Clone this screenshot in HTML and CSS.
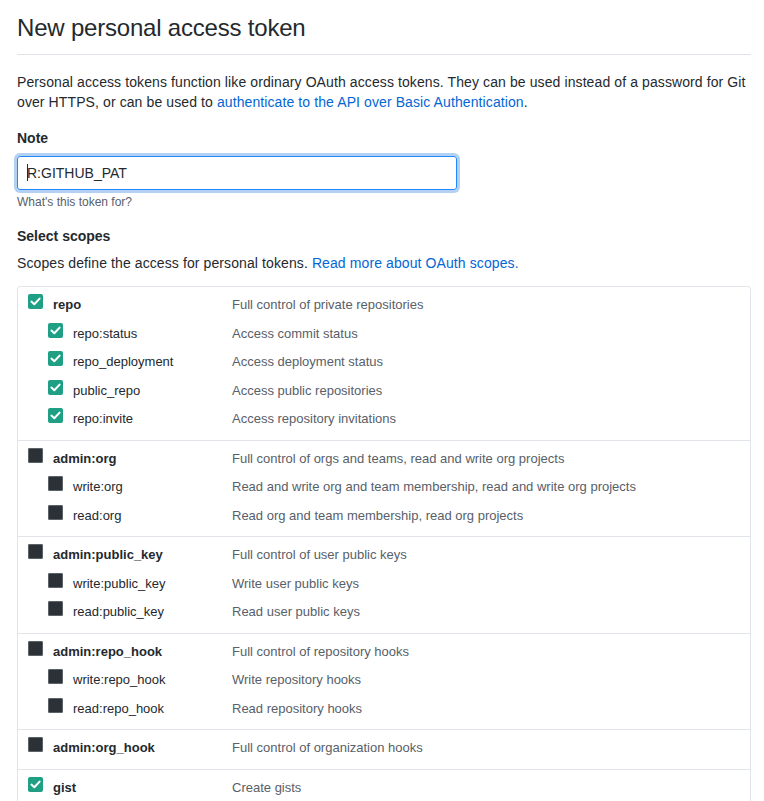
FILE: index.html
```html
<!DOCTYPE html>
<html lang="en">
<head>
<meta charset="utf-8">
<title>New personal access token</title>
<link rel="stylesheet" href="styles.css">
</head>
<body>
<div class="page">
  <h2 class="subhead">New personal access token</h2>
  <p class="intro">Personal access tokens function like ordinary OAuth access tokens. They can be used instead of a password for Git over HTTPS, or can be used to <a href="#">authenticate to the API over Basic Authentication</a>.</p>

  <div class="field-label">Note</div>
  <div class="input"><span class="caret"></span>R:GITHUB_PAT</div>
  <div class="note">What's this token for?</div>

  <div class="section-title">Select scopes</div>
  <p class="scopes-intro">Scopes define the access for personal tokens. <a href="#">Read more about OAuth scopes.</a></p>

  <div class="scopes">
    <div class="group">
      <div class="row top"><span class="name"><span class="cb on"><svg viewBox="0 0 15 15"><path d="M3.4 7.6 6.3 10.3 11.6 4.6"/></svg></span>repo</span><span class="desc">Full control of private repositories</span></div>
      <div class="row sub"><span class="name"><span class="cb on"><svg viewBox="0 0 15 15"><path d="M3.4 7.6 6.3 10.3 11.6 4.6"/></svg></span>repo:status</span><span class="desc">Access commit status</span></div>
      <div class="row sub"><span class="name"><span class="cb on"><svg viewBox="0 0 15 15"><path d="M3.4 7.6 6.3 10.3 11.6 4.6"/></svg></span>repo_deployment</span><span class="desc">Access deployment status</span></div>
      <div class="row sub"><span class="name"><span class="cb on"><svg viewBox="0 0 15 15"><path d="M3.4 7.6 6.3 10.3 11.6 4.6"/></svg></span>public_repo</span><span class="desc">Access public repositories</span></div>
      <div class="row sub"><span class="name"><span class="cb on"><svg viewBox="0 0 15 15"><path d="M3.4 7.6 6.3 10.3 11.6 4.6"/></svg></span>repo:invite</span><span class="desc">Access repository invitations</span></div>
    </div>
    <div class="group">
      <div class="row top"><span class="name"><span class="cb"></span>admin:org</span><span class="desc">Full control of orgs and teams, read and write org projects</span></div>
      <div class="row sub"><span class="name"><span class="cb"></span>write:org</span><span class="desc">Read and write org and team membership, read and write org projects</span></div>
      <div class="row sub"><span class="name"><span class="cb"></span>read:org</span><span class="desc">Read org and team membership, read org projects</span></div>
    </div>
    <div class="group">
      <div class="row top"><span class="name"><span class="cb"></span>admin:public_key</span><span class="desc">Full control of user public keys</span></div>
      <div class="row sub"><span class="name"><span class="cb"></span>write:public_key</span><span class="desc">Write user public keys</span></div>
      <div class="row sub"><span class="name"><span class="cb"></span>read:public_key</span><span class="desc">Read user public keys</span></div>
    </div>
    <div class="group">
      <div class="row top"><span class="name"><span class="cb"></span>admin:repo_hook</span><span class="desc">Full control of repository hooks</span></div>
      <div class="row sub"><span class="name"><span class="cb"></span>write:repo_hook</span><span class="desc">Write repository hooks</span></div>
      <div class="row sub"><span class="name"><span class="cb"></span>read:repo_hook</span><span class="desc">Read repository hooks</span></div>
    </div>
    <div class="group">
      <div class="row top"><span class="name"><span class="cb"></span>admin:org_hook</span><span class="desc">Full control of organization hooks</span></div>
    </div>
    <div class="group">
      <div class="row top"><span class="name"><span class="cb on"><svg viewBox="0 0 15 15"><path d="M3.4 7.6 6.3 10.3 11.6 4.6"/></svg></span>gist</span><span class="desc">Create gists</span></div>
    </div>
  </div>
</div>
</body>
</html>
```

FILE: styles.css
```css
html, body {
  margin: 0;
  padding: 0;
  background: #ffffff;
}
body {
  font-family: "Liberation Sans", Arial, sans-serif;
  font-size: 14px;
  line-height: 20px;
  color: #24292e;
}
a {
  color: #0366d6;
  text-decoration: none;
}
.page {
  width: 734px;
  padding: 10px 13px 0 17px;
}
.subhead {
  margin: 0;
  font-size: 24px;
  font-weight: normal;
  letter-spacing: -0.2px;
  line-height: 36px;
  padding-bottom: 8px;
  border-bottom: 1px solid #e1e4e8;
}
.intro {
  margin: 17px 0 0;
  letter-spacing: 0.1px;
}
.field-label {
  margin-top: 16px;
  font-weight: bold;
}
.input {
  box-sizing: border-box;
  width: 440px;
  height: 34px;
  margin-top: 8px;
  padding: 6px 9px;
  border: 1px solid #2188ff;
  border-radius: 3px;
  box-shadow: 0 0 0 3px rgba(3, 102, 214, 0.3);
  color: #24292e;
  white-space: nowrap;
}
.caret {
  display: inline-block;
  width: 1px;
  height: 17px;
  margin-right: -1px;
  background: #24292e;
  vertical-align: -3px;
}
.note {
  margin-top: 4px;
  font-size: 12px;
  line-height: 17px;
  color: #586069;
}
.section-title {
  margin-top: 15px;
  font-weight: bold;
}
.scopes-intro {
  margin: 7px 0 0;
  letter-spacing: 0.1px;
}
.scopes {
  margin-top: 13px;
  border: 1px solid #e1e4e8;
  border-radius: 3px;
}
.group {
  padding: 4px 0 6px;
}
.group + .group {
  border-top: 1px solid #e1e4e8;
}
.row {
  display: flex;
  align-items: baseline;
  line-height: 28.5px;
  height: 28.5px;
  white-space: nowrap;
}
.name {
  box-sizing: border-box;
  width: 214px;
  flex: none;
  font-size: 13px;
  color: #24292e;
}
.row.top .name {
  padding-left: 10px;
  font-weight: bold;
}
.row.sub .name {
  padding-left: 30px;
}
.desc {
  font-size: 13px;
  color: #586069;
}
.cb {
  display: inline-block;
  box-sizing: border-box;
  width: 15px;
  height: 15px;
  margin-right: 10px;
  border-radius: 2px;
  background: #2b3137;
  box-shadow: inset 0 0 0 1px #5b6268;
  vertical-align: baseline;
  position: relative;
}
.cb.on {
  background: #1f9f84;
  box-shadow: none;
}
.cb svg {
  position: absolute;
  left: 0;
  top: 0;
  width: 15px;
  height: 15px;
  fill: none;
  stroke: #ffffff;
  stroke-width: 2;
  stroke-linecap: round;
  stroke-linejoin: round;
}
```
